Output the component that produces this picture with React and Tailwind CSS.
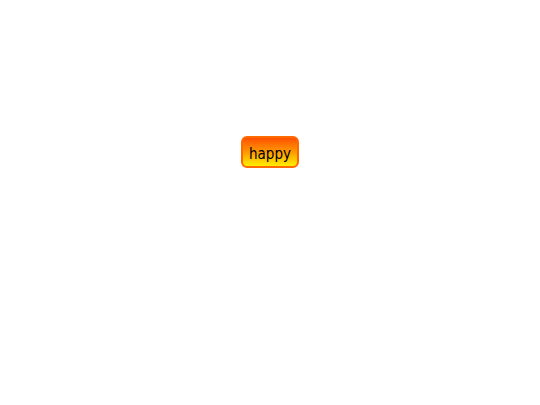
import React from 'react';

export default function App() {
  return (
    <div className="min-h-[405px] w-full bg-white flex justify-center pt-[136px]">
      <button
        type="button"
        className="h-[32px] w-[58px] rounded-[6px] border-2 border-[#ff6a00] bg-gradient-to-b from-[#ff4e00] via-[#ff9800] to-[#ffee00] text-[15px] leading-none text-black flex items-center justify-center pt-[4px]"
        style={{ fontFamily: '"Comic Sans MS", "DejaVu Sans Condensed", "DejaVu Sans", sans-serif' }}
      >
        happy
      </button>
    </div>
  );
}
